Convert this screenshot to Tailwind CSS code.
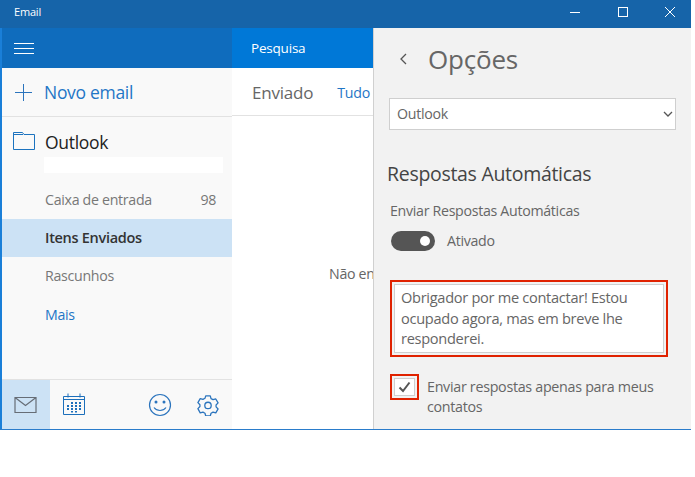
<!DOCTYPE html>
<html><head><meta charset="utf-8"><script src="https://cdn.jsdelivr.net/npm/@tailwindcss/browser@4"></script></head>
<body class="bg-white">
<div class="w-[691px] h-[430px] flex flex-col overflow-hidden font-['Open_Sans',sans-serif] border-b border-[#2a7ccb]">
  <div class="h-[28px] shrink-0 bg-[#1664a9] flex items-center text-white pb-[4px]">
    <span class="ml-[14px] text-[11px] tracking-[-0.2px]">Email</span>
    <div class="ml-auto flex items-center">
      <svg width="12" height="12" class="mr-[36px]" viewBox="0 0 12 12"><path d="M1 6.500h10" stroke="#fff" stroke-width="1"/></svg>
      <svg width="12" height="12" class="mr-[35px]" viewBox="0 0 12 12"><rect x="1.500" y="1.500" width="9" height="9" fill="none" stroke="#fff"/></svg>
      <svg width="12" height="12" class="mr-[15px]" viewBox="0 0 12 12"><path d="M1 1l10 10M11 1L1 11" stroke="#fff" stroke-width="1"/></svg>
    </div>
  </div>
  <div class="flex-1 flex min-h-0 border-l-2 border-[#1a7fd8]">
    <div class="w-[230px] shrink-0 bg-[#f9f9f9] flex flex-col">
      <div class="h-[40px] bg-[#0f6cbd] flex items-center pl-[12px] pb-[1px]">
        <svg width="20" height="12" viewBox="0 0 20 12"><path d="M0 1.500h20M0 6.500h20M0 11.500h20" stroke="#fff" stroke-width="1"/></svg>
      </div>
      <div class="h-[49px] flex items-center border-b border-[#e2e2e2] pt-[1px]">
        <svg width="17" height="17" class="ml-[13px]" viewBox="0 0 17 17"><path d="M8.500 0v17M0 8.500h17" stroke="#2b74bd" stroke-width="1"/></svg>
        <span class="ml-[12px] text-[17.500px] text-[#1f76c6] tracking-[-0.3px]">Novo email</span>
      </div>
      <div class="flex items-center h-[40px] pt-[10px]">
        <svg width="22" height="18" class="ml-[11px] mb-[3px]" viewBox="0 0 22 18"><path d="M.5 17.500V.5h9l1.500 2H21.500v15z M.5 2.500H10" fill="none" stroke="#1c73bf"/></svg>
        <span class="ml-[10px] text-[17.500px] text-[#222] tracking-[-0.3px]">Outlook</span>
      </div>
      <div class="h-[16px] w-[179px] ml-[42px] bg-white"></div>
      <div class="h-[46px] pt-[8px] flex items-center justify-between pl-[43px] pr-[16px] text-[14.200px] text-[#777] tracking-[-0.3px]"><span>Caixa de entrada</span><span>98</span></div>
      <div class="h-[38px] flex items-center pl-[43px] bg-[#cce2f5] text-[14.500px] font-semibold text-[#333] tracking-[-0.3px]">Itens Enviados</div>
      <div class="h-[38px] flex items-center pl-[43px] text-[14.200px] text-[#777] tracking-[-0.3px]">Rascunhos</div>
      <div class="h-[39px] flex items-center pl-[43px] pt-[1px] text-[14.200px] text-[#1f76c6] tracking-[-0.3px]">Mais</div>
      <div class="mt-auto h-[50px] border-t border-[#e2e2e2] flex items-stretch relative">
        <div class="w-[48px] bg-[#cce2f5] flex items-center justify-center">
          <svg width="24" height="18" viewBox="0 0 24 18"><path d="M1 1.500h21v15H1zM1 1.500l10.500 8 10.500-8" fill="none" stroke="#666d76" stroke-width="1.200"/></svg>
        </div>
        <div class="flex items-center ml-[13px]">
          <svg width="22" height="23" viewBox="0 0 22 23"><path d="M.5 3.500h21v18H.5zM.5 6.500h21M5 .5v4M17 .5v4" fill="none" stroke="#1c6fbb" stroke-width="1"/><path d="M8 9h2v2H8zM12 9h2v2h-2zM16 9h2v2h-2zM4 12h2v2H4zM8 12h2v2H8zM12 12h2v2h-2zM16 12h2v2h-2zM4 15h2v2H4zM8 15h2v2H8zM12 15h2v2h-2zM16 15h2v2h-2zM8 18h2v1.500H8zM12 18h2v1.500h-2z" fill="#1c6fbb"/></svg>
        </div>
        <div class="flex items-center ml-[63px]">
          <svg width="24" height="24" viewBox="0 0 24 24"><circle cx="12" cy="12" r="10.500" fill="none" stroke="#2b74bd" stroke-width="1.200"/><circle cx="8" cy="9" r="1.500" fill="#2b74bd"/><circle cx="16" cy="9" r="1.500" fill="#2b74bd"/><path d="M6 14.500c3 4 9 4 12 0" fill="none" stroke="#2b74bd" stroke-width="1.200"/></svg>
        </div>
        <div class="flex items-center ml-[25px]">
          <svg width="22" height="22" viewBox="0 0 24 24"><path d="M9.500 2h5l.8 3 2.200 1.200 3-.8 2.500 4.300-2.200 2.300v2l2.200 2.300-2.500 4.300-3-.8-2.200 1.200-.8 3h-5l-.8-3-2.200-1.200-3 .8L1 16l2.200-2.300v-2L1 9.400l2.500-4.300 3 .8 2.200-1.200z" fill="none" stroke="#2b74bd" stroke-width="1.400" stroke-linejoin="round"/><circle cx="12" cy="12.500" r="3.500" fill="none" stroke="#2b74bd" stroke-width="1.400"/></svg>
        </div>
      </div>
    </div>
    <div class="w-[141px] shrink-0 bg-white flex flex-col overflow-hidden">
      <div class="h-[40px] bg-[#0078d7] flex items-center pl-[19px] text-[13.500px] text-white tracking-[-0.2px]">Pesquisa</div>
      <div class="h-[48px] flex items-center border-b border-[#e2e2e2] pl-[20px] pt-[3px] whitespace-nowrap">
        <span class="text-[17px] text-[#666] tracking-[-0.2px]">Enviado</span><span class="ml-[24px] text-[14.200px] text-[#1f76c6] tracking-[-0.3px]">Tudo</span>
      </div>
      <div class="flex-1 pt-[147px] pl-[97px] text-[14.200px] text-[#666] whitespace-nowrap tracking-[-0.3px]">Não en</div>
    </div>
    <div class="flex-1 bg-[#f2f2f2] border-l border-[#d0d0d0] pl-[15px] pr-[15px] flex flex-col">
      <div class="h-[70px] shrink-0 flex items-center pl-[10px] pb-[9px]">
        <svg width="9" height="12" viewBox="0 0 9 12"><path d="M7 1L2 6l5 5" fill="none" stroke="#555" stroke-width="1.300"/></svg>
        <span class="ml-[20px] text-[26px] text-[#666] leading-none tracking-[-0.2px]">Opções</span>
      </div>
      <div class="h-[32px] shrink-0 bg-white border border-[#cfcfcf] flex items-center justify-between pl-[7px] pr-[2px] text-[14.200px] text-[#666] tracking-[-0.3px]">
        <span>Outlook</span>
        <svg width="10" height="8" viewBox="0 0 10 8"><path d="M1 2l4 4 4-4" fill="none" stroke="#555" stroke-width="1.300"/></svg>
      </div>
      <div class="mt-[31px] ml-[-2px] text-[19.500px] leading-[26px] text-[#444] tracking-[-0.3px]">Respostas Automáticas</div>
      <div class="mt-[14px] ml-[1px] text-[14.200px] leading-[20px] text-[#666] tracking-[-0.3px]">Enviar Respostas Automáticas</div>
      <div class="mt-[10px] ml-[2px] h-[20px] flex items-center">
        <div class="w-[44px] h-[20px] rounded-full bg-[#555] relative"><div class="absolute right-[5px] top-[5px] w-[10px] h-[10px] rounded-full bg-white"></div></div>
        <span class="ml-[12px] text-[14.200px] text-[#666] tracking-[-0.3px]">Ativado</span>
      </div>
      <div class="mt-[29px] ml-[1px] w-[278px] h-[77px] border-2 border-[#e02200] p-[2px] shrink-0">
        <div class="h-full border border-[#cfcfcf] bg-white pl-[6px] pt-[2px] text-[14.600px] leading-[20.500px] text-[#666] tracking-[-0.3px]">Obrigador por me contactar! Estou ocupado agora, mas em breve lhe responderei.</div>
      </div>
      <div class="mt-[17px] ml-[1px] flex items-start">
        <div class="w-[29px] h-[26px] shrink-0 border-2 border-[#e02200] p-[2px]">
          <div class="w-full h-full bg-white border border-[#cfcfcf] flex items-center justify-center">
            <svg width="13" height="12" viewBox="0 0 13 12"><path d="M1.500 6.500l3.500 3.500 6.500-8.500" fill="none" stroke="#555" stroke-width="2"/></svg>
          </div>
        </div>
        <div class="ml-[8px] text-[14.300px] leading-[20px] text-[#666] tracking-[-0.3px] w-[240px] pt-[3px]">Enviar respostas apenas para meus contatos</div>
      </div>
    </div>
  </div>
</div>
</body></html>
